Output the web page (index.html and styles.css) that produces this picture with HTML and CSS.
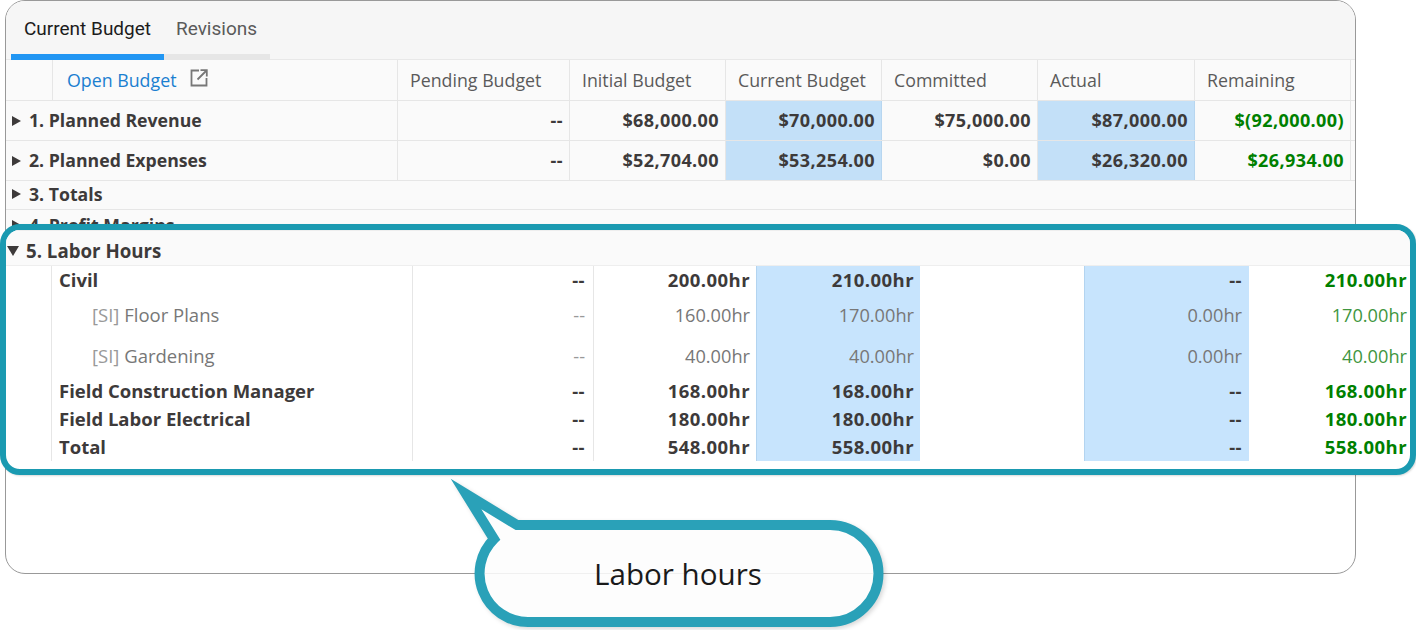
FILE: index.html
```html
<!DOCTYPE html>
<html lang="en">
<head>
<meta charset="utf-8">
<title>Labor hours</title>
<link rel="stylesheet" href="styles.css">
</head>
<body>
<main class="card">
  <nav class="tabs">
    <div class="tab tab-active">Current Budget</div>
    <div class="tab tab-rest">Revisions</div>
  </nav>
  <div class="row head">
    <div class="c"></div>
    <div class="c name"><a class="link">Open Budget</a>
      <svg class="ext" width="18" height="18" viewBox="0 0 18 18" fill="none" stroke="#777" stroke-width="1.8"><path d="M9 1.5H1.5V16.5H16.5V9"/><path d="M7.5 10.5L16.5 1.5M10.5 1.2H16.8V7.5"/></svg>
    </div>
    <div class="c">Pending Budget</div>
    <div class="c">Initial Budget</div>
    <div class="c">Current Budget</div>
    <div class="c">Committed</div>
    <div class="c">Actual</div>
    <div class="c">Remaining</div>
    <div class="c"></div>
  </div>
  <div class="row data">
    <div class="c label"><i class="caret"></i>1. Planned Revenue</div>
    <div class="c num">--</div>
    <div class="c num">$68,000.00</div>
    <div class="c num blue">$70,000.00</div>
    <div class="c num">$75,000.00</div>
    <div class="c num blue">$87,000.00</div>
    <div class="c num green">$(92,000.00)</div>
    <div class="c"></div>
  </div>
  <div class="row data">
    <div class="c label"><i class="caret"></i>2. Planned Expenses</div>
    <div class="c num">--</div>
    <div class="c num">$52,704.00</div>
    <div class="c num blue">$53,254.00</div>
    <div class="c num">$0.00</div>
    <div class="c num blue">$26,320.00</div>
    <div class="c num green">$26,934.00</div>
    <div class="c"></div>
  </div>
  <div class="group g3"><i class="caret"></i>3. Totals</div>
  <div class="group g4"><i class="caret"></i>4. Profit Margins</div>
</main>

<section class="focus">
  <div class="fhead"><i class="caret-down"></i>5. Labor Hours</div>
  <div class="frow r29 bold">
    <div></div><div class="fc fname">Civil</div><div class="fc n">--</div><div class="fc n">200.00hr</div><div class="fc n fblue">210.00hr</div><div class="fc n"></div><div class="fc n fblue">--</div><div class="fc n fgreen">210.00hr</div>
  </div>
  <div class="frow r41 sub">
    <div></div><div class="fc fname indent"><span class="si">[SI]</span> Floor Plans</div><div class="fc n dash">--</div><div class="fc n">160.00hr</div><div class="fc n fblue">170.00hr</div><div class="fc n"></div><div class="fc n fblue">0.00hr</div><div class="fc n fgreen">170.00hr</div>
  </div>
  <div class="frow r41 sub">
    <div></div><div class="fc fname indent"><span class="si">[SI]</span> Gardening</div><div class="fc n dash">--</div><div class="fc n">40.00hr</div><div class="fc n fblue">40.00hr</div><div class="fc n"></div><div class="fc n fblue">0.00hr</div><div class="fc n fgreen">40.00hr</div>
  </div>
  <div class="frow r28 bold">
    <div></div><div class="fc fname">Field Construction Manager</div><div class="fc n">--</div><div class="fc n">168.00hr</div><div class="fc n fblue">168.00hr</div><div class="fc n"></div><div class="fc n fblue">--</div><div class="fc n fgreen">168.00hr</div>
  </div>
  <div class="frow r28 bold">
    <div></div><div class="fc fname">Field Labor Electrical</div><div class="fc n">--</div><div class="fc n">180.00hr</div><div class="fc n fblue">180.00hr</div><div class="fc n"></div><div class="fc n fblue">--</div><div class="fc n fgreen">180.00hr</div>
  </div>
  <div class="frow r28 bold">
    <div></div><div class="fc fname">Total</div><div class="fc n">--</div><div class="fc n">548.00hr</div><div class="fc n fblue">558.00hr</div><div class="fc n"></div><div class="fc n fblue">--</div><div class="fc n fgreen">558.00hr</div>
  </div>
</section>

<aside class="callout">
  <svg class="bubble" width="450" height="155" viewBox="445 475 450 155">
    <path d="M517 525H830A48.5 48.5 0 0 1 830 622H528A48.5 48.5 0 0 1 494 539L466 494Z" fill="#fdfdfd" stroke="#2aa1b8" stroke-width="10" stroke-linejoin="miter" stroke-miterlimit="10"/>
    <path class="behind" d="M485 573.5H873"/>
  </svg>
  <span class="bubble-text">Labor hours</span>
</aside>
</body>
</html>
```
FILE: styles.css
```css
* { box-sizing: border-box; }
html, body { margin: 0; padding: 0; background: #fff; }
body {
  position: relative;
  width: 1416px;
  height: 630px;
  overflow: hidden;
  font-family: "Open Sans", "Noto Sans", sans-serif;
  font-size: 16px;
  color: #3d3a3a;
}
.card {
  margin-left: 5px;
  width: 1351px;
  height: 574px;
  border: 1px solid #999;
  border-radius: 20px;
  background: #fff;
  overflow: hidden;
}
.tabs {
  display: flex;
  height: 59px;
  padding-left: 5px;
  background: #f6f6f6;
  border-bottom: 1px solid #e8e8e8;
}
.tab {
  height: 59px;
  border-bottom: 6px solid #e6e6e6;
  padding-top: 16px;
  padding-left: 13px;
  line-height: 24px;
  font-family: "Roboto", "Open Sans", sans-serif;
  font-size: 19px;
}
.tab-active { width: 153px; color: #1c1c1c; border-bottom-color: #2196f3; }
.tab-rest { width: 106px; color: #5a5a5a; padding-left: 12px; }

.row {
  display: grid;
  background: #fafafa;
  border-bottom: 1px solid #e6e6e6;
}
.head {
  height: 41px;
  grid-template-columns: 47px 345px 172px 156px 156px 156px 157px 156px 1fr;
  color: #5a5a5a;
  font-size: 17.8px;
}
.head .c { padding-left: 12px; }
.head .name { padding-left: 14px; gap: 14px; }
.data {
  height: 40px;
  grid-template-columns: 392px 172px 156px 156px 156px 157px 156px 1fr;
  font-weight: 700;
  font-size: 17.7px;
}
.c {
  display: flex;
  align-items: center;
  padding-left: 13px;
  border-right: 1px solid #e6e6e6;
}
.data .c { padding-bottom: 2px; }
.link { color: #1a7fd0; }
.ext { position: relative; top: -2px; }
.data .label { padding-left: 6px; }
.data .label .caret { position: relative; top: 1px; }
.data .num {
  justify-content: flex-end;
  padding: 0 6px 2px 0;
  font-size: 18px;
  letter-spacing: 0.4px;
}
.blue { background: #c3e0f8; border-color: #b7d6f0; }
.green { color: #008000; }

.caret {
  display: inline-block;
  width: 0;
  height: 0;
  margin-right: 8px;
  border-style: solid;
  border-width: 5.5px 0 5.5px 9px;
  border-color: transparent transparent transparent #3d3a3a;
}
.group {
  display: flex;
  align-items: center;
  padding-left: 6px;
  background: #fafafa;
  border-bottom: 1px solid #e6e6e6;
  font-weight: 700;
  font-size: 17.7px;
}
.g3 { height: 29px; padding-bottom: 2px; }
.g4 { height: 30px; }

.focus {
  position: absolute;
  left: 0;
  top: 224px;
  width: 1416px;
  height: 251px;
  border: 6px solid #1a9ab1;
  border-radius: 20px;
  background: #fff;
  overflow: hidden;
  font-size: 18.5px;
  box-shadow: 1px 1px 2px rgba(0,0,0,0.15);
}
.fhead {
  display: flex;
  align-items: center;
  height: 36px;
  padding: 5px 0 0 1px;
  background: #fafafa;
  border-top: 1px solid #eee;
  border-bottom: 1px solid #eee;
  font-weight: 700;
  font-size: 18.7px;
}
.caret-down {
  width: 0;
  height: 0;
  margin-right: 7px;
  border-style: solid;
  border-width: 10px 6px 0 6px;
  border-color: #3d3a3a transparent transparent transparent;
}
.frow {
  display: grid;
  grid-template-columns: 45px 361px 181px 163px 164px 164px 165px 1fr;
}
.r29 { height: 29px; }
.r41 { height: 41px; }
.r28 { height: 28px; }
.bold { font-weight: 700; }
.sub { color: #777; font-weight: 400; }
.fc {
  display: flex;
  align-items: center;
  border-left: 1px solid #e6e6e6;
  padding: 0 0 2px 7px;
}
.n { justify-content: flex-end; padding: 0 6px 2px 0; letter-spacing: 0.45px; }
.sub .n { letter-spacing: 0; font-size: 18.2px; }
.frow > .n:nth-child(n+5) { border-left-color: transparent; }
.fblue { background: #c7e4fd; border-left-color: #b3d4f0 !important; }
.frow > .fblue:nth-child(7) { padding-right: 7px; }
.fgreen { color: #008000; padding-right: 3px; }
.sub .fgreen { color: #3f963f; }
.dash { color: #999; padding-right: 8px; }
.bold .n:nth-child(3) { padding-right: 8px; }
.indent { padding-left: 40px; white-space: pre; }
.si { color: #999; }

.callout {
  position: absolute;
  left: 445px;
  top: 475px;
  width: 450px;
  height: 155px;
}
.bubble {
  position: absolute;
  left: 0;
  top: 0;
  filter: drop-shadow(2px 2px 2px rgba(0,0,0,0.15));
}
.behind { stroke: #f0f0f0; stroke-width: 1; fill: none; }
.bubble-text {
  position: absolute;
  left: 149px;
  top: 77px;
  font-size: 29.6px;
  line-height: 44px;
  color: #1a1a1a;
  white-space: nowrap;
}
```
